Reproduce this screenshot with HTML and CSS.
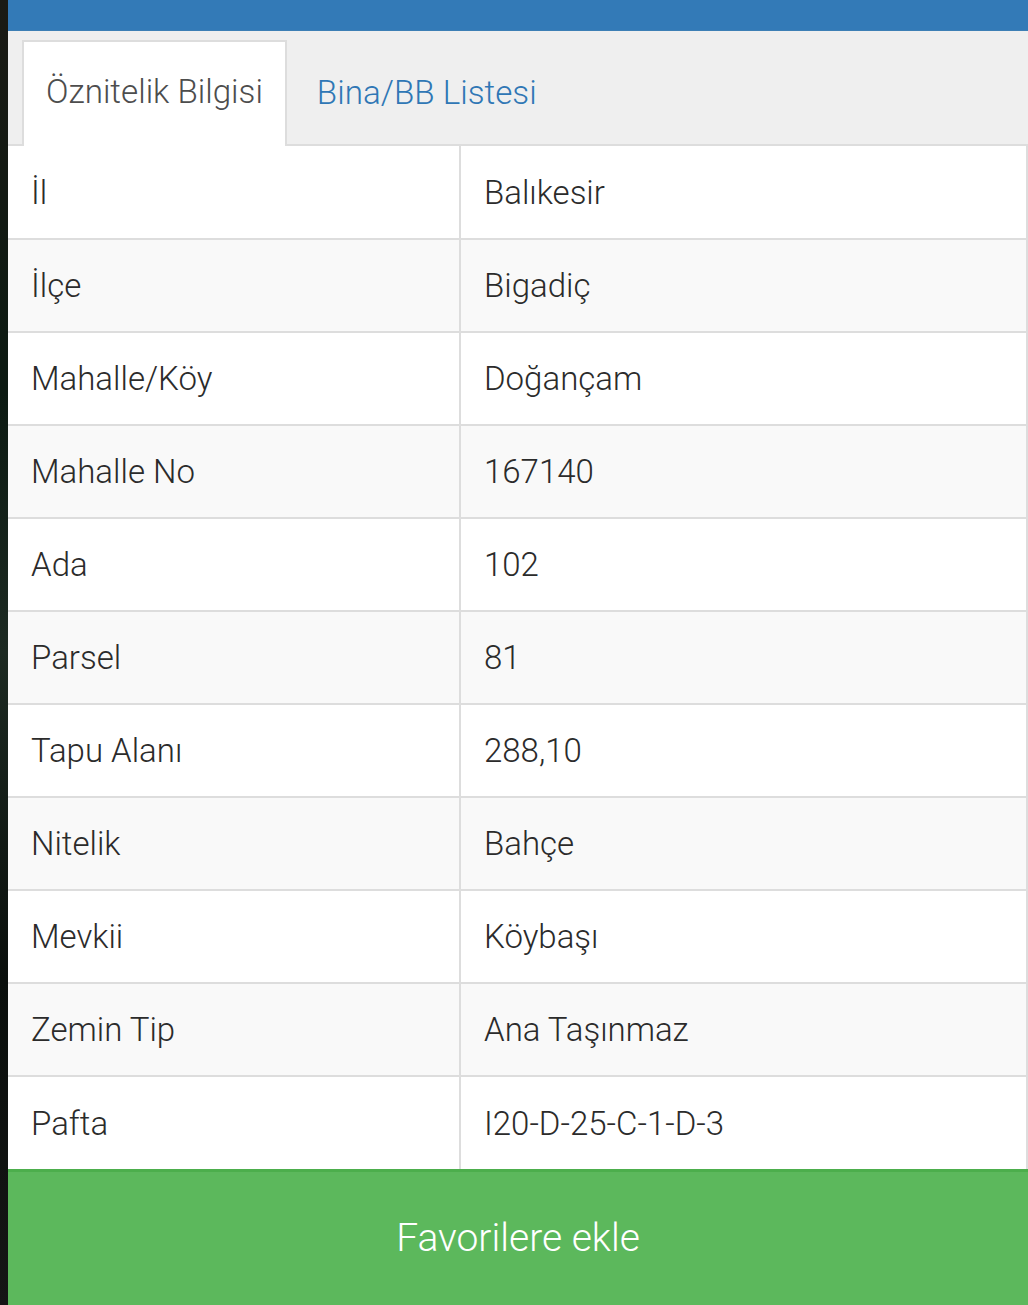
FILE: index.html
```html
<!DOCTYPE html>
<html lang="tr">
<head>
<meta charset="utf-8">
<title>Öznitelik Bilgisi</title>
<link rel="stylesheet" href="styles.css">
</head>
<body>
<div class="page">
  <div class="edge"></div>
  <div class="panel">
    <div class="header"></div>
    <div class="tabs">
      <div class="tab active">Öznitelik Bilgisi</div>
      <div class="tab">Bina/BB Listesi</div>
    </div>
    <table class="info">
      <tbody>
        <tr><td class="key">İl</td><td>Balıkesir</td></tr>
        <tr><td class="key">İlçe</td><td>Bigadiç</td></tr>
        <tr><td class="key">Mahalle/Köy</td><td>Doğançam</td></tr>
        <tr><td class="key">Mahalle No</td><td>167140</td></tr>
        <tr><td class="key">Ada</td><td>102</td></tr>
        <tr><td class="key">Parsel</td><td>81</td></tr>
        <tr><td class="key">Tapu Alanı</td><td>288,10</td></tr>
        <tr><td class="key">Nitelik</td><td>Bahçe</td></tr>
        <tr><td class="key">Mevkii</td><td>Köybaşı</td></tr>
        <tr><td class="key">Zemin Tip</td><td>Ana Taşınmaz</td></tr>
        <tr><td class="key">Pafta</td><td>I20-D-25-C-1-D-3</td></tr>
      </tbody>
    </table>
    <button class="fav">Favorilere ekle</button>
  </div>
</div>
</body>
</html>
```
FILE: styles.css
```css
html, body {
  margin: 0;
  padding: 0;
  height: 100%;
  overflow: hidden;
}
body {
  background: #0d130f;
  font-family: Roboto, "Liberation Sans", sans-serif;
}
.page {
  display: flex;
  min-height: 100%;
}
.edge {
  width: 8px;
  flex: 0 0 8px;
  background: linear-gradient(180deg, #1a1a14 0%, #0c1a12 30%, #1d2a22 50%, #0a0f0c 75%, #151515 100%);
}
.panel {
  flex: 1;
  display: flex;
  flex-direction: column;
  background: #fff;
}
.header {
  height: 30px;
  background: #337ab7;
  border-bottom: 1px solid #3d7fb5;
}
.tabs {
  display: flex;
  align-items: flex-end;
  background: #efefef;
  padding: 9px 0 0 14px;
  border-bottom: 2px solid #dddddd;
}
.tab {
  height: 104px;
  display: flex;
  align-items: center;
  padding: 0 29px 6px 28px;
  box-sizing: border-box;
  font-size: 33.2px;
  font-weight: 300;
  color: #2f77b5;
  margin-bottom: -2px;
  border: 2px solid transparent;
  border-bottom: none;
}
.tab.active {
  background: #fff;
  color: #4d4d4d;
  border-color: #dddddd;
  padding: 0 22px 6px 22px;
  height: 106px;
}
.info {
  width: 100%;
  border-collapse: collapse;
  color: #2b2b2b;
  font-size: 33px;
  font-weight: 300;
}
.info td {
  height: 91px;
  padding: 0 24px 0 23px;
  border-bottom: 2px solid #dddddd;
  border-right: 2px solid #dddddd;
  vertical-align: middle;
  box-sizing: border-box;
}
.info tr td:first-child {
  width: 452px;
}
.info tr {
  height: 93px;
}
.info tr:nth-child(odd) {
  background: #fff;
}
.info tr:nth-child(even) {
  background: #f9f9f9;
}
.info tr:last-child td {
  border-bottom: none;
}
.fav {
  display: block;
  width: 100%;
  height: 136px;
  margin: 0;
  border: none;
  border-top: 3px solid #4cae4c;
  background: #5cb85c;
  color: #fff;
  font-family: Roboto, "Liberation Sans", sans-serif;
  font-weight: 300;
  font-size: 39px;
  padding: 0 0 2px 0;
  cursor: pointer;
}
```
